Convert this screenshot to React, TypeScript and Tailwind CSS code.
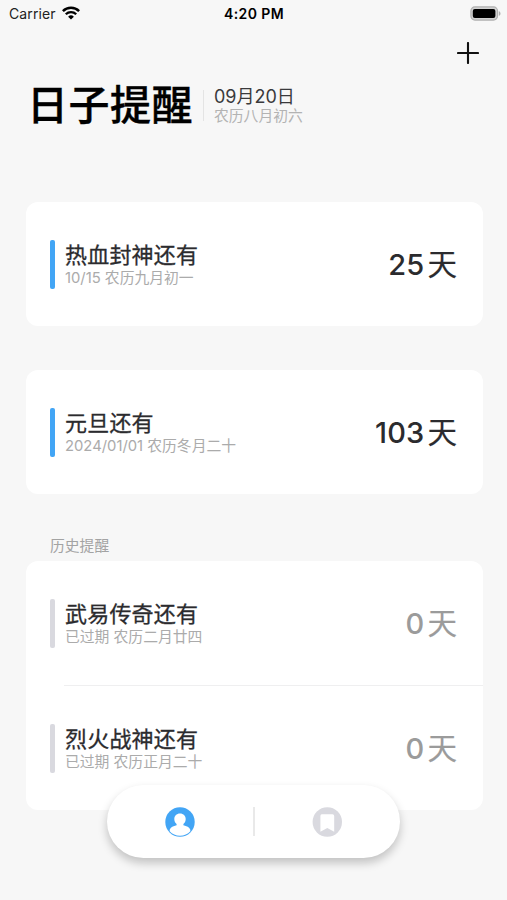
import { clsx } from "clsx";

type Reminder = {
  title: string;
  detail: string;
  days: number;
  expired?: boolean;
};

const upcoming: Reminder[] = [
  { title: "热血封神还有", detail: "10/15 农历九月初一", days: 25 },
  { title: "元旦还有", detail: "2024/01/01 农历冬月二十", days: 103 },
];

const history: Reminder[] = [
  { title: "武易传奇还有", detail: "已过期 农历二月廿四", days: 0, expired: true },
  { title: "烈火战神还有", detail: "已过期 农历正月二十", days: 0, expired: true },
];

const StatusBar = () => (
  <div className="grid h-7 grid-cols-3 items-center pl-[9px] pr-[6px] text-[14px] leading-none text-black">
    <div className="flex items-center gap-[6px]">
      <span className="text-[#222] tracking-[0.1px]">Carrier</span>
      <svg className="-mt-[2px] h-[14px] w-[18px]" viewBox="0 0 18 14" fill="none" stroke="currentColor">
        <path d="M0.9 5.2a11.5 11.5 0 0 1 16.2 0" strokeWidth="2.5" />
        <path d="M3.8 8.2a7.4 7.4 0 0 1 10.4 0" strokeWidth="2.3" />
        <path d="M9 13.6 6.1 10.7a4.1 4.1 0 0 1 5.8 0Z" fill="currentColor" stroke="none" />
      </svg>
    </div>
    <span className="-ml-[2px] text-center font-semibold tracking-[0.4px]">4:20 PM</span>
    <svg className="-mt-[2px] h-[15px] w-[31px] justify-self-end" viewBox="0 0 31 15">
      <rect x="0.9" y="0.9" width="26.6" height="13.2" rx="4" fill="#d2d2d2" stroke="#b0b0b0" strokeWidth="1.2" />
      <rect x="2.8" y="2.9" width="22.6" height="9.2" rx="2" fill="#000" />
      <path d="M28.8 5.2c2.3.7 2.3 3.9 0 4.6Z" fill="#b0b0b0" />
    </svg>
  </div>
);

const ReminderRow = ({ title, detail, days, expired }: Reminder) => (
  <div className="flex h-[124px] items-center pl-6 pr-[26px]">
    <div className={clsx("h-[49px] w-[5px] rounded-[2px]", expired ? "bg-[#d9d9df]" : "bg-[#42a5f5]")} />
    <div className="ml-[10px] flex-1">
      <p className="text-[22px] leading-[26px] tracking-[0.2px] text-[#2b2b2e] [-webkit-text-stroke:0.3px]">{title}</p>
      <p className="mt-px text-[14.8px] leading-[18px] text-[#ababab]">{detail}</p>
    </div>
    <p
      className={clsx(
        "flex items-center gap-[3px] text-[29px] font-medium leading-none",
        expired ? "text-[#9b9b9b]" : "text-[#2b2b2e]"
      )}
    >
      <span className="tracking-[0.2px]">{days}</span>
      <span className="pt-[2px] text-[29.5px] font-normal [-webkit-text-stroke:0.2px]">天</span>
    </p>
  </div>
);

const TabBar = () => (
  <div className="absolute left-[107px] top-[785px] flex h-[73px] w-[293px] items-center rounded-full bg-white shadow-[0_5px_10px_rgba(0,0,0,0.22)]">
    <div className="flex flex-1 justify-center">
      <svg className="h-[30px] w-[30px]" viewBox="0 0 30 30">
        <circle cx="15" cy="15" r="14.7" fill="#42a5f5" />
        <path
          d="M15 6.6c-3.400 0-5.700 2.400-5.700 5.500 0 2.100.9 3.900 2.300 5v1.200C8.400 19 5.600 20.400 4.700 22.700v1.500c2.500 2.800 6.200 4.500 10.300 4.500s7.800-1.700 10.300-4.500v-1.500c-.9-2.300-3.700-3.700-6.900-4.400v-1.200c1.400-1.100 2.300-2.900 2.300-5 0-3.100-2.300-5.500-5.700-5.500Z"
          fill="#fff"
        />
      </svg>
    </div>
    <div className="h-[29px] w-[2px] bg-[#e9e9e9]" />
    <div className="flex flex-1 justify-center">
      <svg className="h-[30px] w-[30px]" viewBox="0 0 30 30">
        <circle cx="15.3" cy="15" r="14.7" fill="#d9d9df" />
        <path d="M9.700 7.300h10.800q1.700 0 1.700 1.700V24.800L15.300 20.900 8.400 24.800V9q0-1.700 1.300-1.700Z" fill="#fff" />
      </svg>
    </div>
  </div>
);

const App = () => {
  return (
    <div className="relative h-[900px] w-[507px] overflow-hidden bg-[#f7f7f7] font-[Inter,'Noto_Sans_CJK_SC',sans-serif]">
      <StatusBar />

      <div className="flex h-[50px] items-center justify-end pr-7">
        <svg className="h-[22px] w-[22px]" viewBox="0 0 22 22" stroke="#111" strokeWidth="2.1" strokeLinecap="round">
          <path d="M11 1v20M1 11h20" />
        </svg>
      </div>

      <header className="flex h-[54px] items-center pl-[27px]">
        <h1 className="text-[41px] font-medium leading-none tracking-[0.5px] text-black [-webkit-text-stroke:0.4px]">
          日子提醒
        </h1>
        <div className="ml-[10px] h-[31px] w-px bg-[#e4e4e4]" />
        <div className="ml-[10px] pt-px">
          <p className="text-[18px] leading-[20px] text-[#3a3a3c]">09月20日</p>
          <p className="text-[14.8px] leading-[18px] text-[#b3b3b3]">农历八月初六</p>
        </div>
      </header>

      <main className="pl-[26px] pr-[24px] pt-[70px]">
        <div className="flex flex-col gap-[44px]">
          {upcoming.map((item) => (
            <section key={item.title} className="rounded-xl bg-white">
              <ReminderRow {...item} />
            </section>
          ))}
        </div>

        <h2 className="mt-[43px] pl-6 text-[14.8px] leading-[18px] text-[#a3a3a3]">历史提醒</h2>
        <section className="mt-[6px] rounded-xl bg-white">
          {history.map((item, i) => (
            <div key={item.title}>
              {i > 0 && <div className="ml-[38px] h-px bg-[#efeff0]" />}
              <ReminderRow {...item} />
            </div>
          ))}
        </section>
      </main>

      <TabBar />
    </div>
  );
};

export default App;
